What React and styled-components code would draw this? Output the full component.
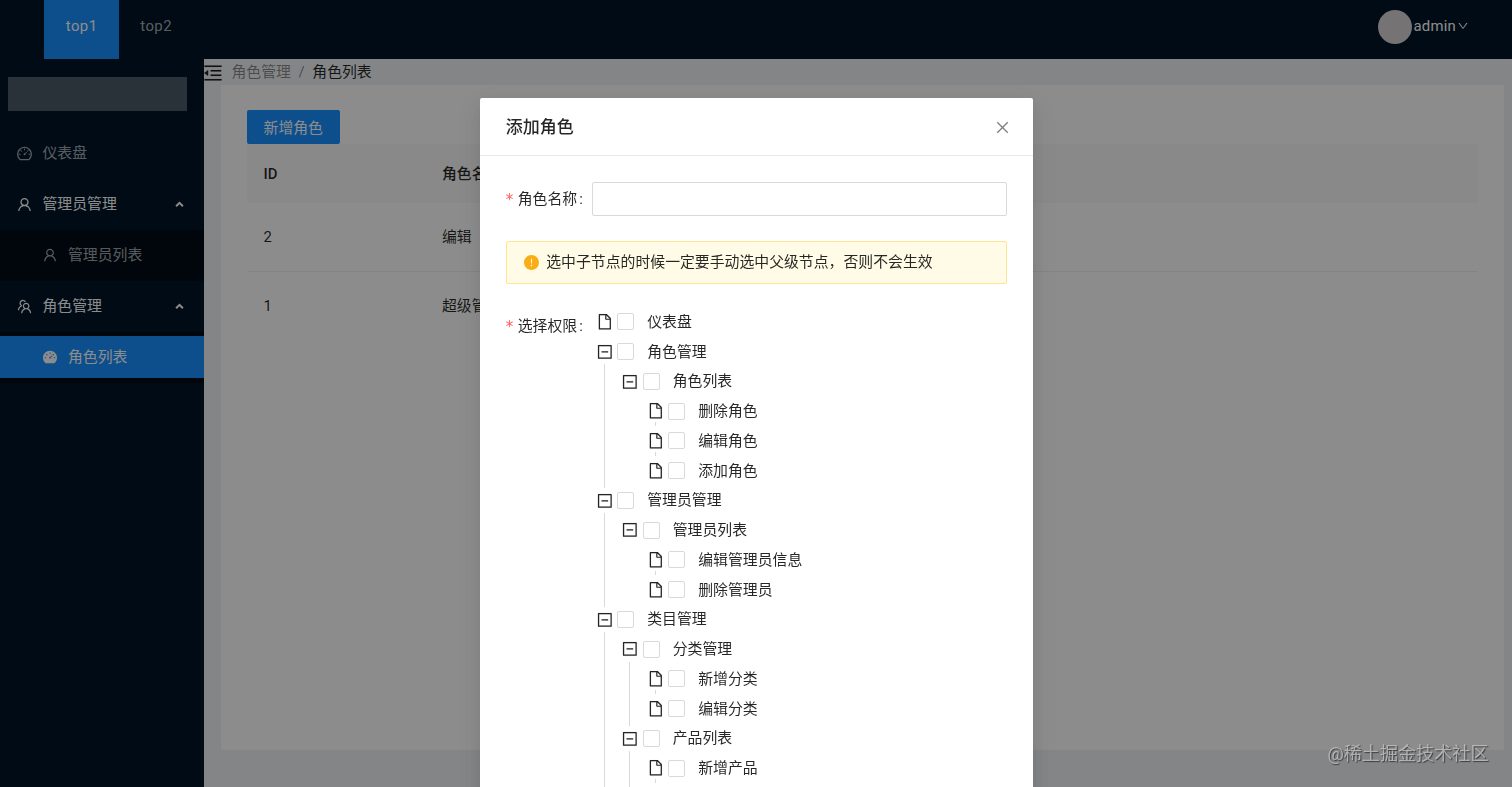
import React from "react";
import styled, { createGlobalStyle } from "styled-components";
import {
  AiFillDashboard,
  AiFillExclamationCircle,
  AiOutlineClose,
  AiOutlineDashboard,
  AiOutlineDown,
  AiOutlineFile,
  AiOutlineMenuFold,
  AiOutlineMinusSquare,
  AiOutlineTeam,
  AiOutlineUser,
} from "react-icons/ai";

//#region Data
const menus = [
  { title: "仪表盘", icon: AiOutlineDashboard },
  {
    title: "管理员管理",
    icon: AiOutlineUser,
    children: [{ title: "管理员列表", icon: AiOutlineUser }],
  },
  {
    title: "角色管理",
    icon: AiOutlineTeam,
    children: [{ title: "角色列表", icon: AiFillDashboard, active: true }],
  },
];

const roles = [
  { id: 2, name: "编辑" },
  { id: 1, name: "超级管理员" },
];

// more: the list goes on below the fold
const rights = [
  { title: "仪表盘" },
  {
    title: "角色管理",
    children: [
      {
        title: "角色列表",
        children: [
          { title: "删除角色" },
          { title: "编辑角色" },
          { title: "添加角色" },
        ],
      },
    ],
  },
  {
    title: "管理员管理",
    children: [
      {
        title: "管理员列表",
        children: [{ title: "编辑管理员信息" }, { title: "删除管理员" }],
      },
    ],
  },
  {
    title: "类目管理",
    children: [
      {
        title: "分类管理",
        children: [{ title: "新增分类" }, { title: "编辑分类" }],
      },
      {
        title: "产品列表",
        more: true,
        children: [{ title: "新增产品", more: true }],
      },
    ],
  },
];
//#endregion

//#region Styles
const GlobalStyle = createGlobalStyle`
  * {
    box-sizing: border-box;
  }
  body {
    margin: 0;
    overflow: hidden;
    font-family: Roboto, "Noto Sans CJK SC", sans-serif;
    font-size: 14.87px;
    line-height: 23px;
    color: rgba(0, 0, 0, 0.85);
  }
  svg {
    display: block;
    flex: none;
  }
`;

const Page = styled.div`
  display: flex;
  flex-direction: column;
  height: 787px;
  background: #f0f2f5;
`;

const Header = styled.header`
  display: flex;
  justify-content: space-between;
  height: 59px;
  padding: 0 43px 0 44.4px;
  background: #001529;
`;

const TopMenu = styled.nav`
  display: flex;
`;

const TopItem = styled.a`
  height: 59px;
  padding: 15px 21.4px 0;
  letter-spacing: 0.45px;
  color: ${(p) => (p.$active ? "#fff" : "rgba(255, 255, 255, 0.65)")};
  background: ${(p) => (p.$active ? "#1890ff" : "transparent")};
`;

const Account = styled.div`
  display: flex;
  align-items: center;
  height: 53px;
  color: #fff;
  letter-spacing: 0.25px;
  svg {
    margin: 0 0 2px 1px;
  }
`;

const Avatar = styled.span`
  width: 34px;
  height: 34px;
  margin-right: 1.5px;
  border-radius: 50%;
  background: #d6d2d2;
`;

const Body = styled.div`
  display: flex;
  flex: 1;
  min-height: 0;
`;

const Sider = styled.aside`
  width: 204px;
  padding-top: 17.5px;
  background: #001529;
`;

const Logo = styled.div`
  width: 179px;
  height: 34px;
  margin: 0 0 17px 8px;
  background: rgba(255, 255, 255, 0.3);
`;

const MenuSlot = styled.div`
  height: 51px;
  padding: 4.25px 0;
  background: ${(p) => (p.$sub ? "#000c17" : "transparent")};
`;

const MenuItem = styled.div`
  display: flex;
  align-items: center;
  height: 42.5px;
  padding: 0 20px 0 ${(p) => (p.$sub ? "42px" : "16px")};
  color: ${(p) => (p.$bright ? "#fff" : "rgba(255, 255, 255, 0.65)")};
  background: ${(p) => (p.$active ? "#1890ff" : "transparent")};
`;

const MenuText = styled.span`
  flex: 1;
  margin-left: ${(p) => (p.$sub ? "10px" : "9.5px")};
`;

const Main = styled.main`
  flex: 1;
  min-width: 0;
`;

const Crumbs = styled.div`
  display: flex;
  height: 26px;
  padding-top: 1.5px;
  color: rgba(0, 0, 0, 0.85);
  svg {
    margin: 1.5px 7.3px 0 -1.8px;
    stroke: currentColor;
    stroke-width: 6;
  }
`;

const CrumbText = styled.span`
  color: ${(p) => (p.$last ? "rgba(0, 0, 0, 0.85)" : "rgba(0, 0, 0, 0.45)")};
`;

const CrumbSlash = styled.span`
  margin: 0 7.6px;
  color: rgba(0, 0, 0, 0.45);
`;

const Content = styled.section`
  height: 665px;
  margin: 0 8px 0 16.5px;
  padding: 25.4px 26px;
  background: #fff;
`;

const PrimaryButton = styled.button`
  display: block;
  height: 34px;
  width: 93.5px;
  padding: 2px 0 0;
  border: 0;
  border-radius: 2px;
  font: inherit;
  color: #fff;
  background: #1890ff;
`;

const Table = styled.table`
  width: 100%;
  border-collapse: separate;
  border-spacing: 0;
  table-layout: fixed;
`;

const Th = styled.th`
  width: ${(p) => p.$w || "auto"};
  height: 59px;
  padding: 1px 17px 0;
  text-align: left;
  font-weight: 500;
  background: #fafafa;
`;

const Td = styled.td`
  height: 68.5px;
  padding: 1px 17px 0;
  border-bottom: 1px solid #f0f0f0;
  tr:last-child > & {
    border-bottom: 0;
  }
`;

const Mask = styled.div`
  position: fixed;
  inset: 0;
  display: flex;
  justify-content: center;
  align-items: flex-start;
  padding-top: 97.5px;
  overflow: hidden;
  background: rgba(0, 0, 0, 0.45);
`;

const Modal = styled.div`
  width: 552.5px;
  height: 900px;
  margin-left: 1px;
  flex: none;
  border-radius: 2px;
  background: #fff;
  box-shadow: 0 3px 6px -4px rgba(0, 0, 0, 0.12), 0 6px 16px rgba(0, 0, 0, 0.08),
    0 9px 28px 8px rgba(0, 0, 0, 0.05);
`;

const ModalHeader = styled.div`
  display: flex;
  align-items: center;
  justify-content: space-between;
  height: 58px;
  padding: 2px 21.5px 0 25.5px;
  font-size: 17px;
  font-weight: 500;
  border-bottom: 1px solid #e8e8e8;
  svg {
    color: rgba(0, 0, 0, 0.5);
    margin-top: 1px;
  }
`;

const ModalBody = styled.div`
  padding: 26px 25.5px;
`;

const FormRow = styled.div`
  display: flex;
`;

const Label = styled.label`
  display: flex;
  width: 86px;
  padding-top: 6px;
  white-space: nowrap;
`;

const Star = styled.span`
  width: 12px;
  padding-top: 1px;
  font-family: "DejaVu Sans", sans-serif;
  font-size: 15px;
  color: #ff5c5e;
`;

const Colon = styled.span`
  margin-left: 2px;
`;

const Input = styled.input`
  flex: 1;
  min-width: 0;
  height: 34px;
  padding: 0 12px;
  border: 1px solid #d9d9d9;
  border-radius: 2px;
  outline: none;
`;

const Alert = styled.div`
  display: flex;
  align-items: center;
  height: 42.5px;
  margin: 25.5px 0;
  padding: 1px 0 0 16px;
  border: 1px solid #ffe58f;
  border-radius: 2px;
  background: #fffbe6;
  svg {
    margin: -1px 6.5px 0 0;
    color: #faad14;
  }
`;

const Tree = styled.ul`
  margin: -2px 0 0;
  padding: 0;
  list-style: none;
`;

const TreeRow = styled.div`
  display: flex;
  align-items: center;
  height: 29.75px;
  padding-left: 3.8px;
  line-height: 20px;
  svg {
    stroke: currentColor;
    stroke-width: 4;
  }
`;

const Checkbox = styled.span`
  width: 17px;
  height: 17px;
  margin: 0 13px 0 4px;
  border: 1px solid #d9d9d9;
  border-radius: 2px;
  background: #fff;
`;

const TreeItem = styled.li`
  padding-left: ${(p) => (p.$level ? "25.5px" : "0")};
`;

/* guide line runs from under the switcher to the next sibling */
const Branch = styled.ul`
  margin: -2.5px 0;
  padding: 2.5px 0 ${(p) => (p.$more ? "30px" : "2.5px")};
  list-style: none;
  background: ${(p) =>
    p.$line
      ? "linear-gradient(#d9d9d9, #d9d9d9) 12px 0 / 1px 100% no-repeat"
      : "none"};
`;

const LeafItem = styled(TreeItem)`
  background: ${(p) =>
    p.$line
      ? "linear-gradient(#d9d9d9, #d9d9d9) 37.5px 100% / 1px 4px no-repeat"
      : "none"};
`;

const Watermark = styled.div`
  position: fixed;
  right: 23.5px;
  bottom: 20px;
  font-size: 18.1px;
  line-height: 27px;
  color: rgba(200, 200, 200, 0.75);
  text-shadow: 1px 1px 1px rgba(0, 0, 0, 0.55);
`;
//#endregion

function Arrow() {
  return (
    <svg width="9" height="7" viewBox="0 0 9 7">
      <path d="M1.1 5.2 4.5 1.8l3.4 3.4" fill="none" stroke="#fff" strokeWidth="2" />
    </svg>
  );
}

function Menu() {
  return (
    <Sider>
      <Logo />
      {menus.map((m, key) => {
        const Icon = m.icon;
        return (
          <React.Fragment key={key}>
            <MenuSlot>
              <MenuItem $bright={!!m.children}>
                <Icon size={17} />
                <MenuText>{m.title}</MenuText>
                {m.children && <Arrow />}
              </MenuItem>
            </MenuSlot>
            {m.children &&
              m.children.map((c, i) => {
                const SubIcon = c.icon;
                return (
                  <MenuSlot key={i} $sub>
                    <MenuItem $sub $active={c.active} $bright={c.active}>
                      <SubIcon size={16} />
                      <MenuText $sub>{c.title}</MenuText>
                    </MenuItem>
                  </MenuSlot>
                );
              })}
          </React.Fragment>
        );
      })}
    </Sider>
  );
}

function TreeNode({ node, level, last }) {
  const Item = node.children ? TreeItem : LeafItem;
  return (
    <Item $level={level} $line={level > 0 && (!last || node.more)}>
      <TreeRow>
        {node.children ? (
          <AiOutlineMinusSquare size={17.7} />
        ) : (
          <AiOutlineFile size={17.7} />
        )}
        <Checkbox />
        <span>{node.title}</span>
      </TreeRow>
      {node.children && (
        <Branch $line={!last || level === 0 || node.more} $more={node.more}>
          {node.children.map((c, i) => (
            <TreeNode
              key={i}
              node={c}
              level={level + 1}
              last={i === node.children.length - 1}
            />
          ))}
        </Branch>
      )}
    </Item>
  );
}

function RoleModal() {
  return (
    <Mask>
      <Modal>
        <ModalHeader>
          <span>添加角色</span>
          <AiOutlineClose size={17} />
        </ModalHeader>
        <ModalBody>
          <FormRow>
            <Label>
              <Star>*</Star>角色名称<Colon>:</Colon>
            </Label>
            <Input />
          </FormRow>
          <Alert>
            <AiFillExclamationCircle size={17} />
            选中子节点的时候一定要手动选中父级节点，否则不会生效
          </Alert>
          <FormRow>
            <Label>
              <Star>*</Star>选择权限<Colon>:</Colon>
            </Label>
            <Tree>
              {rights.map((node, key) => (
                <TreeNode
                  key={key}
                  node={node}
                  level={0}
                  last={key === rights.length - 1}
                />
              ))}
            </Tree>
          </FormRow>
        </ModalBody>
      </Modal>
    </Mask>
  );
}

function App() {
  return (
    <>
      <GlobalStyle />
      <Page>
        <Header>
          <TopMenu>
            <TopItem $active>top1</TopItem>
            <TopItem>top2</TopItem>
          </TopMenu>
          <Account>
            <Avatar />
            admin
            <AiOutlineDown size={12} />
          </Account>
        </Header>
        <Body>
          <Menu />
          <Main>
            <Crumbs>
              <AiOutlineMenuFold size={22} />
              <CrumbText>角色管理</CrumbText>
              <CrumbSlash>/</CrumbSlash>
              <CrumbText $last>角色列表</CrumbText>
            </Crumbs>
            <Content>
              <PrimaryButton>新增角色</PrimaryButton>
              <Table>
                <thead>
                  <tr>
                    <Th $w="178.5px">ID</Th>
                    <Th>角色名称</Th>
                  </tr>
                </thead>
                <tbody>
                  {roles.map((value, key) => (
                    <tr key={key}>
                      <Td>{value.id}</Td>
                      <Td>{value.name}</Td>
                    </tr>
                  ))}
                </tbody>
              </Table>
            </Content>
          </Main>
        </Body>
      </Page>
      <RoleModal />
      <Watermark>@稀土掘金技术社区</Watermark>
    </>
  );
}

export default App;
